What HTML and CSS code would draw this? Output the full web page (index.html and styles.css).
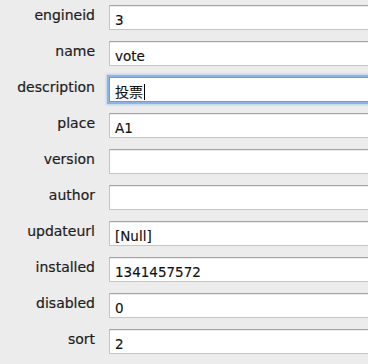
FILE: index.html
```html
<!doctype html>
<html lang="en">
    <head>
        <meta charset="UTF-8" />
        <title>Engine record</title>
        <link rel="stylesheet" href="styles.css">
    </head>
    <body>
        <div class="record">
            <div class="label">engineid</div>
            <div class="field">3</div>

            <div class="label">name</div>
            <div class="field">vote</div>

            <div class="label">description</div>
            <div class="field focused">投票<span class="caret"></span></div>

            <div class="label">place</div>
            <div class="field">A1</div>

            <div class="label">version</div>
            <div class="field"></div>

            <div class="label">author</div>
            <div class="field"></div>

            <div class="label">updateurl</div>
            <div class="field">[Null]</div>

            <div class="label">installed</div>
            <div class="field">1341457572</div>

            <div class="label">disabled</div>
            <div class="field">0</div>

            <div class="label">sort</div>
            <div class="field">2</div>
        </div>
    </body>
</html>
```

FILE: styles.css
```css
* {
    margin: 0;
    padding: 0;
    box-sizing: border-box;
}
body {
    font-family: "DejaVu Sans", "Noto Sans CJK SC", sans-serif;
    background-color: #ececec;
    color: #222222;
    overflow: hidden;
}
.record {
    display: grid;
    grid-template-columns: 95px 1fr;
    column-gap: 14px;
    row-gap: 11px;
    padding-top: 5px;
}
.label {
    font-size: 14px;
    line-height: 17px;
    margin-top: 2px;
    text-align: right;
    color: #1e1e1e;
    -webkit-text-stroke: 0.2px #1e1e1e;
}
/* fields run off the right edge of the window, so no right border */
.field {
    height: 25px;
    padding: 6px 5px 1px;
    font-size: 13.5px;
    line-height: 16px;
    color: #111111;
    background-color: #ffffff;
    border: 1px solid #c4c4c4;
    border-top-color: #a3a3a3;
    border-right-width: 0;
    box-shadow: inset 0 1px 0 #ececec;
    white-space: nowrap;
    overflow: hidden;
    -webkit-text-stroke: 0.15px #111111;
}
.field.focused {
    font-size: 14px;
    border-color: #6f9ad3;
    box-shadow:
        0 0 0 2px #8eb3e3,
        0 0 2px 3px #b9d0ee;
}
.caret {
    display: inline-block;
    width: 1px;
    height: 16px;
    margin-left: 1px;
    vertical-align: -3px;
    background-color: #000000;
}
```
